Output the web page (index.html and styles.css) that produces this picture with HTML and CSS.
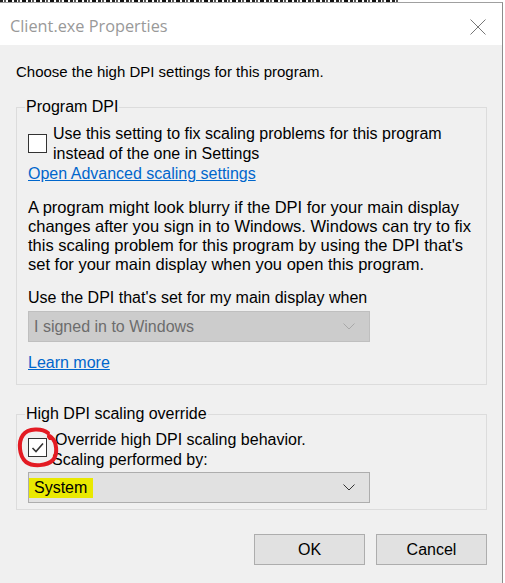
FILE: index.html
```html
<!DOCTYPE html>
<html>
<head>
<meta charset="utf-8">
<link rel="stylesheet" href="styles.css">
</head>
<body>
<div class="behind"></div>
<div class="dialog">
  <div class="titlebar">
    <span class="title">Client.exe Properties</span>
    <svg class="close" width="16" height="16" viewBox="0 0 16 16"><path d="M0.5 0.5 L15.5 15.5 M15.5 0.5 L0.5 15.5" stroke="#777" stroke-width="1" fill="none"/></svg>
  </div>
  <div class="content">
    <p class="intro">Choose the high DPI settings for this program.</p>

    <fieldset class="group g1">
      <legend>Program DPI</legend>
      <div class="check-row">
        <span class="box"></span>
        <span class="check-text">Use this setting to fix scaling problems for this program<br>instead of the one in Settings</span>
      </div>
      <a class="link" href="#">Open Advanced scaling settings</a>
      <p class="para">A program might look blurry if the DPI for your main display<br>changes after you sign in to Windows. Windows can try to fix<br>this scaling problem for this program by using the DPI that's<br>set for your main display when you open this program.</p>
      <p class="label">Use the DPI that's set for my main display when</p>
      <div class="select disabled">
        <span>I signed in to Windows</span>
        <svg class="chev" width="12" height="7" viewBox="0 0 12 7"><path d="M0.5 0.5 L6 6 L11.5 0.5" stroke="#a8a8a8" fill="none"/></svg>
      </div>
      <a class="link learn" href="#">Learn more</a>
    </fieldset>

    <fieldset class="group g2">
      <legend>High DPI scaling override</legend>
      <div class="check-row two">
        <span class="box checked">
          <svg width="17" height="17" viewBox="0 0 17 17"><path d="M3.5 9 L7 12.5 L14 4.5" stroke="#333" stroke-width="1.6" fill="none"/></svg>
          <svg class="circle" width="44" height="42" viewBox="0 0 44 42"><path d="M31 6 C25 1 11 1 6 8 C1 15 2 29 9 35 C16 40 30 39 36 33 C41 27 40 15 34 10 C32 8.5 31 9 33 11" stroke="#e31b23" stroke-width="4" fill="none" stroke-linecap="round"/></svg>
        </span>
        <span class="check-text"><span class="first">Override high DPI scaling behavior.</span><br>Scaling performed by:</span>
      </div>
      <div class="select">
        <span class="hl">System</span>
        <svg class="chev" width="12" height="7" viewBox="0 0 12 7"><path d="M0.5 0.5 L6 6 L11.5 0.5" stroke="#333" fill="none"/></svg>
      </div>
    </fieldset>

    <div class="buttons">
      <button class="btn">OK</button>
      <button class="btn">Cancel</button>
    </div>
  </div>
</div>
</body>
</html>
```
FILE: styles.css
```css
html, body {
  margin: 0;
  padding: 0;
  background: #ffffff;
}
body {
  width: 505px;
  height: 583px;
  overflow: hidden;
  font-family: "Liberation Sans", Arial, sans-serif;
  font-size: 16px;
  color: #000;
}
.behind {
  height: 2px;
  width: 400px;
  background: repeating-linear-gradient(90deg, #222 0 3px, #fff 3px 4px, #555 4px 6px, #fff 6px 8px, #111 8px 12px, #fff 12px 14px);
}
.dialog {
  width: 502px;
  height: 580px;
  border-top: 1px solid #a0a0a0;
  border-right: 1px solid #8c8c8c;
  display: flex;
  flex-direction: column;
}
.titlebar {
  height: 42px;
  flex: none;
  background: #fff;
  display: flex;
  align-items: center;
  justify-content: space-between;
  padding: 0 16px 0 10px;
}
.title {
  font-family: "Open Sans", "Noto Sans", sans-serif;
  font-size: 16.3px;
  color: #999;
  margin-top: 4px;
}
.close {
  margin-top: 5px;
}
.content {
  flex: 1;
  background: #f0f0f0;
  padding: 17px 15px 0 16px;
}
.intro {
  margin: 0;
  font-size: 15px;
  line-height: 20px;
  padding-bottom: 16px;
}
.group {
  margin: 0;
  border: 1px solid #dcdcdc;
  padding: 0 11px;
  min-width: 0;
}
.group legend {
  padding: 0 1px;
  margin-left: -3px;
  line-height: 18px;
}
.g1 {
  height: 277px;
  padding-top: 8px;
}
.check-row {
  display: flex;
  align-items: center;
  gap: 6px;
  line-height: 20px;
}
.box {
  width: 17px;
  height: 17px;
  border: 1px solid #333;
  background: #fff;
  flex: none;
  position: relative;
  margin-top: -2px;
}
.box svg {
  display: block;
}
.box .circle {
  position: absolute;
  left: -12px;
  top: -12px;
}
.link {
  display: block;
  color: #0066cc;
  text-decoration: underline;
  line-height: 20px;
  width: max-content;
}
.para {
  margin: 14px 0 0;
  font-size: 16.5px;
  line-height: 19px;
}
.label {
  margin: 14px 0 0;
  line-height: 20px;
}
.select {
  margin-top: 3px;
  width: 342px;
  height: 31px;
  border: 1px solid #adadad;
  background: #e1e1e1;
  display: flex;
  align-items: center;
  justify-content: space-between;
  padding: 0 14px 0 5px;
  box-sizing: border-box;
}
.select.disabled {
  background: #cccccc;
  border-color: #bfbfbf;
  color: #6d6d6d;
}
.learn {
  margin-top: 11px;
}
.g2 {
  margin-top: 20px;
  height: 96px;
  padding-top: 7px;
}
.check-row.two {
  gap: 5px;
}
.check-row.two .box {
  margin-top: -5px;
}
.check-row.two .first {
  margin-left: 3px;
}
.g2 .select {
  margin-top: 2px;
  padding-left: 0;
}
.hl {
  background: #e9e900;
  padding: 1px 6px 2px 5px;
  line-height: 17px;
}
.buttons {
  display: flex;
  justify-content: flex-end;
  gap: 11px;
  margin-top: 24px;
}
.btn {
  width: 111px;
  height: 31px;
  background: #e1e1e1;
  border: 1px solid #adadad;
  font-family: "Liberation Sans", Arial, sans-serif;
  font-size: 16px;
  color: #000;
  padding: 0;
}
```
